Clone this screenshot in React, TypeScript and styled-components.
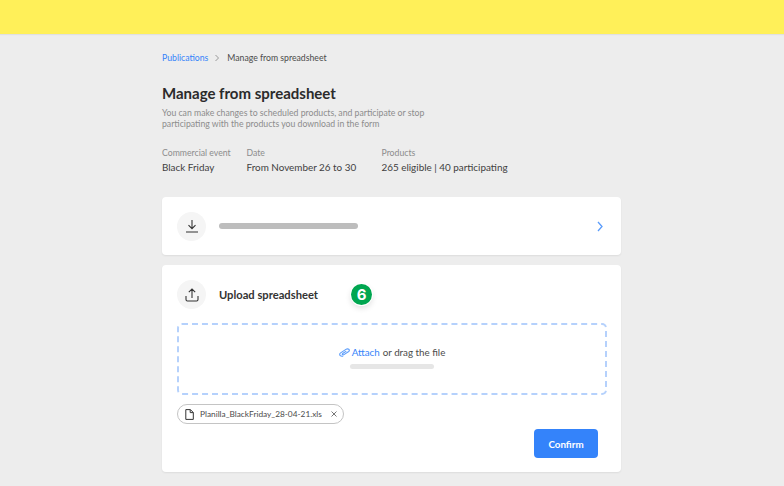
import React from "react";
import styled, { createGlobalStyle } from "styled-components";

const Global = createGlobalStyle`
  html, body { margin: 0; padding: 0; background: #ededed; height: 486px; overflow: hidden; }
  body { font-family: "Lato", "Liberation Sans", sans-serif; }
`;
const Banner = styled.div`height: 34px; background: #fff059; box-shadow: 0 1px 1px rgba(0,0,0,.05);`;
const Main = styled.main`width: 459px; margin: 0 0 0 162px; padding: 18px 0 0;`;
const Crumbs = styled.nav`display: flex; align-items: center; height: 12px; font-size: 8.7px; color: #4b4b4b; line-height: 12px;`;
const CrumbLink = styled.span`color: #3483fa;`;
const CrumbSep = styled.svg`width: 6px; height: 8px; margin: 0 7px 0 6px; fill: none; stroke: #999; stroke-width: 1;`;
const Title = styled.h1`margin: 19px 0 0; font-size: 15px; line-height: 20px; font-weight: 700; color: #2b2b2b;`;
const Description = styled.p`margin: 4px 0 0; width: 270px; font-size: 8.7px; line-height: 11px; color: #8c8c8c;`;
const Facts = styled.div`display: flex; margin-top: 18px;`;
const Fact = styled.div<{ $width: number }>`width: ${(p) => p.$width}px;`;
const FactLabel = styled.div`font-size: 8.7px; line-height: 12px; color: #8c8c8c;`;
const FactValue = styled.div`margin-top: 1px; font-size: 9.9px; line-height: 14px; color: #404040;`;
const Card = styled.section`background: #fff; border-radius: 4px; box-shadow: 0 1px 2px rgba(0,0,0,.07);`;
const DownloadCard = styled(Card)`margin-top: 23px; height: 58px; display: flex; align-items: center; padding: 0 15px;`;
const IconCircle = styled.div`width: 29px; height: 29px; border-radius: 50%; background: #f5f5f5; display: flex; align-items: center; justify-content: center; flex: none;`;
const SkeletonBar = styled.div`width: 139px; height: 6px; margin-left: 13px; border-radius: 3px; background: #bdbdbd;`;
const Chevron = styled.svg`width: 8px; height: 11px; margin-left: auto; margin-right: 2px; fill: none; stroke: #5a9cfb; stroke-width: 1.3;`;
const UploadCard = styled(Card)`margin-top: 10px; height: 207px; padding: 15px 14px 0 15px; box-sizing: border-box;`;
const UploadHeader = styled.div`display: flex; align-items: center;`;
const UploadTitle = styled.h2`margin: 0 0 0 13px; font-size: 11.2px; line-height: 14px; font-weight: 700; color: #333; width: 100px; white-space: nowrap;`;
const StepBadge = styled.div`
  margin-left: 32px; width: 21px; height: 21px; border-radius: 50%; background: #00a650; color: #fff;
  display: flex; align-items: center; justify-content: center; font-family: "Inter", sans-serif; font-size: 15px; font-weight: 700;
  box-shadow: 0 0 0 1px #fff, 0 3px 6px rgba(0,0,0,.14);
`;
const DropZone = styled.div`
  margin-top: 14px; height: 72px; box-sizing: border-box; border: 2px dashed #b5d1fc; border-radius: 5px;
  display: flex; flex-direction: column; align-items: center; padding-top: 21px;
`;
const DropText = styled.div`display: flex; align-items: center; font-size: 9.8px; line-height: 13px; color: #4b4b4b; gap: 2px;`;
const AttachLink = styled.span`color: #3483fa; margin-right: 1px;`;
const DropBar = styled.div`width: 84px; height: 5px; margin-top: 5px; border-radius: 3px; background: #e6e6e6;`;
const FileChip = styled.div`
  margin-top: 9px; height: 18px; width: 158px; border: 1px solid #c4c4c4; border-radius: 10px;
  display: flex; align-items: center; padding-left: 7px; font-size: 8.3px; color: #4b4b4b;
`;
const FileName = styled.span`margin-left: 6px; white-space: nowrap;`;
const CloseIcon = styled.svg`width: 6px; height: 6px; margin-left: auto; margin-right: 6px; stroke: #777; stroke-width: 1; fill: none;`;
const Actions = styled.div`display: flex; justify-content: flex-end; margin-top: 5px; padding-right: 9px;`;
const Confirm = styled.button`
  width: 64px; height: 29px; border: 0; border-radius: 4px; background: #3483fa; color: #fff;
  font-family: inherit; font-size: 9.8px; font-weight: 700; padding: 0;
`;

export default function App() {
  return (
    <>
      <Global />
      <Banner />
      <Main>
        <Crumbs>
          <CrumbLink>Publications</CrumbLink>
          <CrumbSep viewBox="0 0 6 8"><path d="M1.5 1l3 3-3 3" /></CrumbSep>
          <span>Manage from spreadsheet</span>
        </Crumbs>
        <Title>Manage from spreadsheet</Title>
        <Description>You can make changes to scheduled products, and participate or stop participating with the products you download in the form</Description>
        <Facts>
          <Fact $width={84.5}><FactLabel>Commercial event</FactLabel><FactValue>Black Friday</FactValue></Fact>
          <Fact $width={135}><FactLabel>Date</FactLabel><FactValue>From November 26 to 30</FactValue></Fact>
          <Fact $width={200}><FactLabel>Products</FactLabel><FactValue>265 eligible | 40 participating</FactValue></Fact>
        </Facts>
        <DownloadCard>
          <IconCircle>
            <svg width="14" height="14" viewBox="0 0 14 14" fill="none" stroke="#333" strokeWidth="1.1">
              <path d="M7 1v8.5M3.5 6.2L7 9.7l3.5-3.5M1 13h12" />
            </svg>
          </IconCircle>
          <SkeletonBar />
          <Chevron viewBox="0 0 8 11"><path d="M2 1l4 4.5L2 10" /></Chevron>
        </DownloadCard>
        <UploadCard>
          <UploadHeader>
            <IconCircle>
              <svg width="14" height="14" viewBox="0 0 14 14" fill="none" stroke="#333" strokeWidth="1.1">
                <path d="M7 10V1.2M3.8 4.2L7 1l3.2 3.2M1 8v3.6c0 .8.6 1.4 1.4 1.4h9.2c.8 0 1.4-.6 1.4-1.4V8" />
              </svg>
            </IconCircle>
            <UploadTitle>Upload spreadsheet</UploadTitle>
            <StepBadge>6</StepBadge>
          </UploadHeader>
          <DropZone>
            <DropText>
              <svg width="11" height="9" viewBox="0 0 11 9" fill="none" stroke="#5a9cfb" strokeWidth="1.1">
                <path d="M4.2 8.2H3C1.6 8.2.7 7.4.7 6.4c0-.6.3-1.1.9-1.5L6.9 1.4C7.8.8 9 .7 9.8 1.3c.8.6.7 1.6-.1 2.2L5 6.6c-.5.3-1.1.3-1.5 0-.4-.3-.3-.8.2-1.1l3.6-2.4" />
              </svg>
              <AttachLink>Attach</AttachLink>
              <span>or drag the file</span>
            </DropText>
            <DropBar />
          </DropZone>
          <FileChip>
            <svg width="9" height="11" viewBox="0 0 9 11" fill="none" stroke="#333" strokeWidth="1">
              <path d="M.8.6h4.6l2.9 2.9v6.9H.8zM5.2.6v3h3" />
            </svg>
            <FileName>Planilla_BlackFriday_28-04-21.xls</FileName>
            <CloseIcon viewBox="0 0 6 6"><path d="M.5.5l5 5M5.5.5l-5 5" /></CloseIcon>
          </FileChip>
          <Actions><Confirm>Confirm</Confirm></Actions>
        </UploadCard>
      </Main>
    </>
  );
}
